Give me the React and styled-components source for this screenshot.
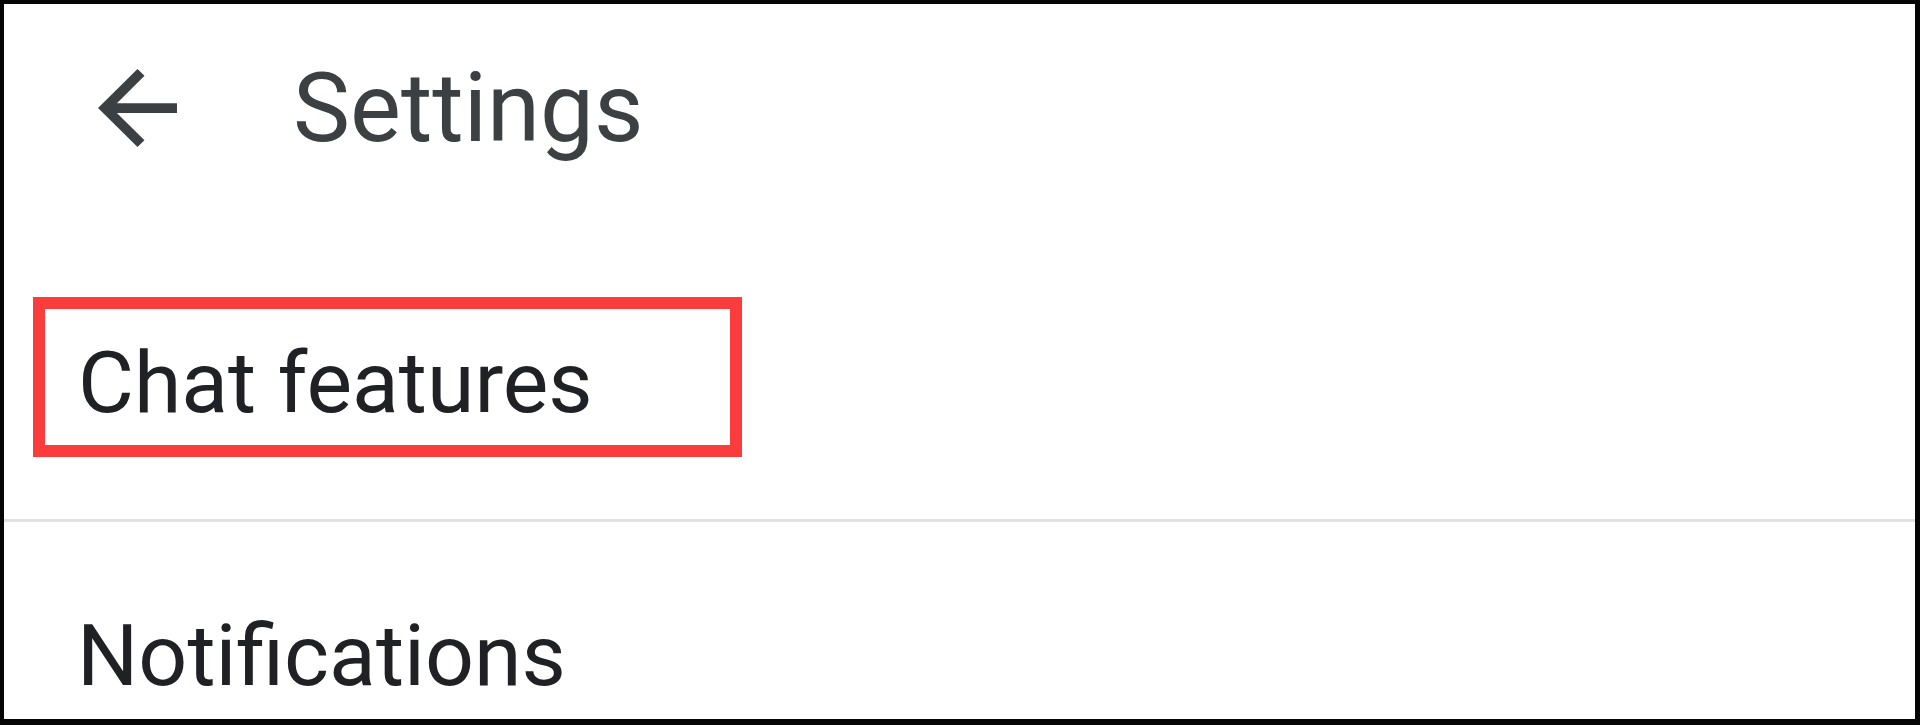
import React from "react";
import styled, { createGlobalStyle } from "styled-components";

const GlobalStyle = createGlobalStyle`
  html, body {
    margin: 0;
    padding: 0;
    background: #ffffff;
  }
  body {
    font-family: Roboto, "Noto Sans", Arial, sans-serif;
  }
`;

const Frame = styled.div`
  box-sizing: border-box;
  width: 1920px;
  height: 725px;
  overflow: hidden;
  background: #ffffff;
  border-style: solid;
  border-color: #050505;
  border-width: 4px 5px 6px 4px;
  display: flex;
  flex-direction: column;
`;

const TopBar = styled.header`
  height: 208px;
  display: flex;
  align-items: center;
  padding-left: 94px;
  gap: 116px;
`;

const BackButton = styled.button`
  display: flex;
  align-items: center;
  justify-content: center;
  padding: 0;
  border: 0;
  background: transparent;
  color: #3c4043;
  cursor: pointer;
`;

const Title = styled.h1`
  margin: 0;
  font-family: Roboto, "Noto Sans", sans-serif;
  font-weight: 400;
  font-size: 96px;
  line-height: 1.17;
  color: #3c4043;
`;

const Item = styled.div`
  display: flex;
  align-items: center;
  padding: ${(p) => p.$pad};
`;

const Highlight = styled.div`
  box-sizing: border-box;
  width: 709px;
  height: 160px;
  border: 12px solid #fb3c3d;
  display: flex;
  align-items: center;
  padding: 12px 0 0 33px;
`;

const Label = styled.span`
  font-family: Roboto, "Noto Sans", sans-serif;
  font-weight: 400;
  font-size: ${(p) => p.$size}px;
  line-height: 1.17;
  color: #202124;
  white-space: nowrap;
`;

const Divider = styled.hr`
  margin: 0;
  border: 0;
  height: 3px;
  background: #e2e2e2;
`;

function ArrowBack() {
  return (
    <svg width="79" height="78" viewBox="4 4 16 16" preserveAspectRatio="none" fill="currentColor" aria-hidden="true">
      <path d="M20 11H7.83l5.59-5.59L12 4l-8 8 8 8 1.41-1.41L7.83 13H20v-2z" />
    </svg>
  );
}

export default function App() {
  return (
    <>
      <GlobalStyle />
      <Frame>
        <TopBar>
          <BackButton aria-label="Back">
            <ArrowBack />
          </BackButton>
          <Title>Settings</Title>
        </TopBar>
        <Item $pad="85px 0 62px 29px">
          <Highlight>
            <Label $size={86}>Chat features</Label>
          </Highlight>
        </Item>
        <Divider />
        <Item $pad="84px 0 0 73px">
          <Label $size={86}>Notifications</Label>
        </Item>
      </Frame>
    </>
  );
}
